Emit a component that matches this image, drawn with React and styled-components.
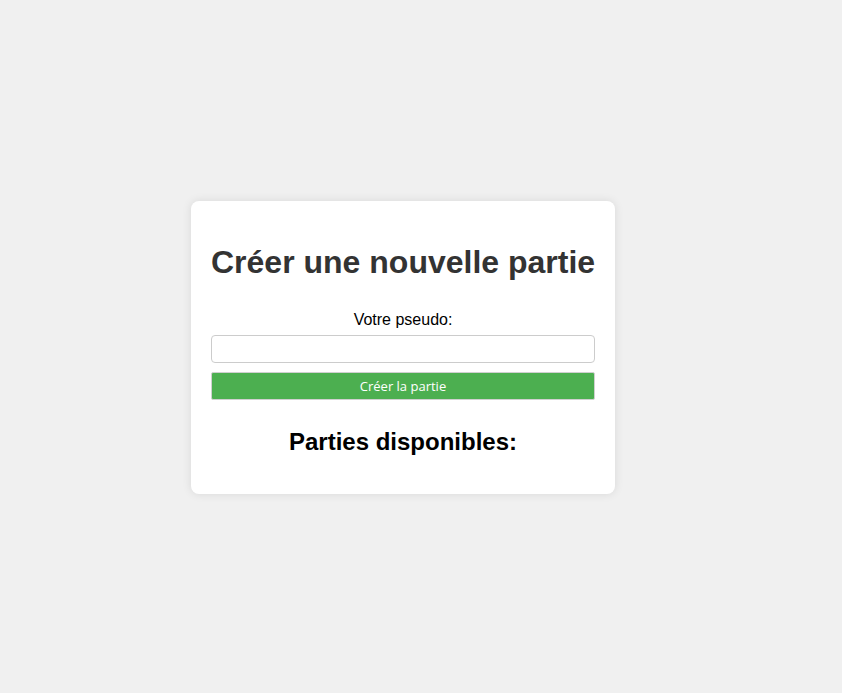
import styled, { createGlobalStyle } from "styled-components";

const GlobalStyle = createGlobalStyle`
  body {
    margin: 0;
    background-color: #f0f0f0;
    font-family: "Liberation Sans", Arial, sans-serif;
  }
`;

const Page = styled.div`
  display: flex;
  justify-content: center;
  align-items: center;
  height: 100vh;
  padding: 2px 36px 0 0;
  box-sizing: border-box;
`;

const Card = styled.div`
  width: 424px;
  box-sizing: border-box;
  background-color: white;
  border-radius: 8px;
  padding: 20px;
  box-shadow: 0 0 10px rgba(0, 0, 0, 0.1);
  text-align: center;
`;

const Title = styled.h1`
  margin: 23px 0 21px;
  font-size: 32px;
  font-weight: bold;
  color: #333;
  white-space: nowrap;
`;

const Form = styled.form`
  display: flex;
  flex-direction: column;
  padding-top: 9px;
`;

const Label = styled.label`
  font-size: 16px;
  color: black;
  margin-bottom: 6px;
`;

const Input = styled.input`
  height: 28px;
  box-sizing: border-box;
  border: 1px solid #ccc;
  border-radius: 4px;
  padding: 5px;
  font-size: 16px;
  margin-bottom: 9px;
`;

const SubmitButton = styled.button`
  height: 28px;
  box-sizing: border-box;
  background-color: #4caf50;
  color: white;
  border: 1px solid #d0d0d0;
  border-radius: 2px;
  font-family: "Open Sans", sans-serif;
  font-size: 13px;
  cursor: pointer;
`;

const SubTitle = styled.h2`
  margin: 28px 0 18px;
  font-size: 24px;
  font-weight: bold;
  color: black;
`;

const App = () => {
  return (
    <>
      <GlobalStyle />
      <Page>
        <Card>
          <Title>Créer une nouvelle partie</Title>
          <Form onSubmit={(e) => e.preventDefault()}>
            <Label htmlFor="pseudo">Votre pseudo:</Label>
            <Input id="pseudo" type="text" />
            <SubmitButton type="submit">Créer la partie</SubmitButton>
          </Form>
          <SubTitle>Parties disponibles:</SubTitle>
        </Card>
      </Page>
    </>
  );
};

export default App;
